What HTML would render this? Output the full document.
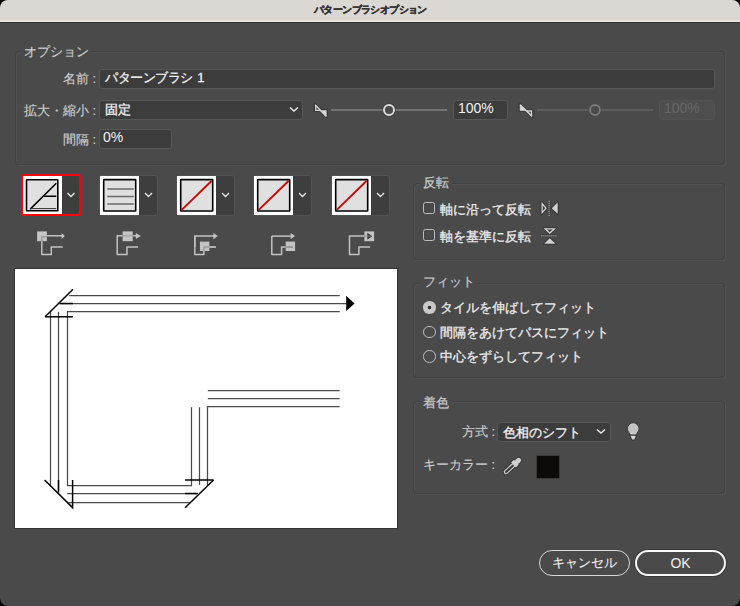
<!DOCTYPE html>
<html><head><meta charset="utf-8">
<style>
html,body{margin:0;padding:0;background:#000;width:740px;height:606px;overflow:hidden}
*{box-sizing:border-box}
body{font-family:"Liberation Sans",sans-serif;color:#ececec;font-size:13px;font-feature-settings:"palt";-webkit-text-stroke:0.3px currentColor}
#win{position:absolute;left:0;top:0;width:740px;height:606px;background:#4a4a4a;border-radius:8px;overflow:hidden}
#title{position:absolute;left:0;top:0;width:740px;height:22px;background:#dbd7d3;border-bottom:2px solid #e7e3df;color:#333;font-size:9.5px;font-weight:bold;text-align:center;line-height:20px;letter-spacing:-0.6px;-webkit-text-stroke:0.35px #333;padding-left:1px}
#tline{position:absolute;left:0;top:22px;width:740px;height:1px;background:#343434}
.abs{position:absolute}
.grp{position:absolute;border:1px solid #414141;border-radius:4px;box-shadow:1px 1px 0 #525252, inset 1px 1px 0 #525252}
.glabel{position:absolute;font-size:13px;color:#cbcbcb;line-height:16px;white-space:nowrap;-webkit-text-stroke:0.2px currentColor}
.lbl{position:absolute;font-size:13px;color:#cdcdcd;line-height:16px;white-space:nowrap;text-align:right;-webkit-text-stroke:0.15px currentColor}
.inp{position:absolute;background:#3c3c3c;border:1.3px solid #575757;border-radius:3px;color:#f2f2f2;font-size:13px;line-height:18px;padding-left:5px;white-space:nowrap}
.txt{position:absolute;white-space:nowrap;line-height:16px}
.tilebox{position:absolute;top:175px;width:59px;height:41px;border:1px solid #535353;border-radius:3px;background:#3e3e3e}
.tilebox::before{content:"";position:absolute;left:0;top:0;width:39px;height:39px;background:#fff}
.chk{position:absolute;width:12px;height:12px;border:1.3px solid #bdbdbd;border-radius:2.5px}
.radio{position:absolute;width:12.5px;height:12.5px;border:1.3px solid #bdbdbd;border-radius:50%}
.radio.sel{border:none;background:radial-gradient(circle,#333 0,#333 1.6px,#c8c8c8 2.1px)}
.btn{position:absolute;border-radius:13px;text-align:center;line-height:24px;font-size:13px;color:#f0f0f0;-webkit-text-stroke:0.1px currentColor}
</style></head><body>
<div id="win">
  <div id="title">パターンブラシオプション</div>
  <div id="tline"></div>

  <!-- Options group -->
  <div class="grp" style="left:15px;top:51px;width:710px;height:114px"></div>
  <div class="glabel" style="left:21px;top:44px;padding:0 3px;background:#4a4a4a">オプション</div>

  <div class="lbl" style="left:0;top:71px;width:96px">名前 :</div>
  <div class="inp" style="left:99px;top:69px;width:616px;height:20px;line-height:16.5px"><span style="letter-spacing:-0.45px">パターンブラシ</span><span style="margin-left:4.5px">1</span></div>

  <div class="lbl" style="left:0;top:102.5px;width:96px">拡大・縮小 :</div>
  <div class="inp" style="left:99px;top:99.5px;width:204px;height:20px;line-height:18.5px">固定</div>
  <svg class="abs" style="left:288px;top:105px" width="12" height="8"><path d="M2 2.5 L6 6 L10 2.5" fill="none" stroke="#e8e8e8" stroke-width="1.5"/></svg>

  <div class="lbl" style="left:0;top:132px;width:96px">間隔 :</div>
  <div class="inp" style="left:99px;top:129px;width:73px;height:20px;font-size:14px;line-height:15px;-webkit-text-stroke:0;padding-left:3px">0%</div>

  <!-- slider 1 -->
  <svg class="abs" style="left:0;top:0" width="740" height="130">
    <g stroke="#363636" stroke-width="3" fill="#363636" stroke-linejoin="round">
      <path d="M315.1 104.7 V110.6 H321 Z M315.1 104.7 L326.3 116.4 M321 110.6 H326.3 V116.4 Z"/>
      <path d="M520.1 104.7 V110.6 H526 Z M520.1 104.7 L532.1 116.4 M526 110.6 H532.1 V116.4 Z"/>
    </g>
    <g stroke="#d6d6d6" stroke-width="1.3" fill="none" stroke-linejoin="miter">
      <path d="M315.7 106 V110.3 H320" />
      <path d="M315.1 104.7 L326.3 116.4" stroke-width="1.5"/>
      <path d="M321 110.6 H326.3 V116.4 Z" fill="#d6d6d6" stroke-width="0.6"/>
      <path d="M520.1 104.7 V110.6 H526 Z" fill="#d6d6d6" stroke-width="0.6"/>
      <path d="M520.1 104.7 L532.1 116.4" stroke-width="1.5"/>
      <path d="M527 111 H531.5 V115.3"/>
    </g>
  </svg>
  <div class="abs" style="left:331px;top:109px;width:116px;height:2px;background:#727272"></div>
  <svg class="abs" style="left:381px;top:102px" width="16" height="16"><circle cx="8" cy="8" r="6.6" fill="#3a3a3a"/><circle cx="8" cy="8" r="5" fill="#4a4a4a" stroke="#dcdcdc" stroke-width="2"/></svg>
  <div class="inp" style="left:453px;top:100px;width:55px;height:20px;font-size:14px;line-height:15px;-webkit-text-stroke:0;padding-left:4px">100%</div>

  <!-- slider 2 (disabled) -->
  <div class="abs" style="left:537px;top:109px;width:116px;height:2px;background:#5c5c5c"></div>
  <svg class="abs" style="left:587px;top:102px" width="16" height="16"><circle cx="8" cy="8" r="6.4" fill="#444"/><circle cx="8" cy="8" r="5" fill="#4a4a4a" stroke="#7c7c7c" stroke-width="1.8"/></svg>
  <div class="inp" style="left:659px;top:100px;width:56px;height:20px;background:#4e4e4e;border-color:#535353;color:#666;font-size:14px;line-height:15px;-webkit-text-stroke:0;padding-left:4px">100%</div>

  <!-- tiles row -->
  <div class="abs" style="left:21px;top:174px;width:60px;height:42px;border:2px solid #f00;border-radius:3px;background:#3e3e3e"></div>
  <div class="abs" style="left:23px;top:176px;width:39px;height:38px;background:#fff"></div>
  <div class="tilebox" style="left:99px"></div>
  <div class="tilebox" style="left:176px"></div>
  <div class="tilebox" style="left:253px"></div>
  <div class="tilebox" style="left:331px"></div>
  <svg class="abs" style="left:0;top:0" width="740" height="606">
    <g fill="none" stroke-linecap="butt">
      <!-- tile 1 -->
      <rect x="26.5" y="179.8" width="31.3" height="31" rx="0.4" fill="#e0e0e0" stroke="#000" stroke-width="1.6"/>
      <path d="M30.2 209.1 L56.3 183.2" stroke="#000" stroke-width="1.5"/>
      <path d="M44 196.3 L56.3 196.3" stroke="#000" stroke-width="1.5"/>
      <path d="M30.5 208.6 L56.3 208.6" stroke="#333" stroke-width="1"/>
      <!-- tile 2 -->
      <rect x="103.7" y="179.6" width="32" height="31.4" rx="0.4" fill="#e0e0e0" stroke="#000" stroke-width="1.6"/>
      <path d="M107.3 188.9 H133.8 M107.3 196.5 H133.8 M107.3 203.9 H133.8" stroke="#6a6a6a" stroke-width="1.5"/>
      <!-- tile 3-5 -->
      <rect x="180.7" y="179.6" width="32" height="31.4" rx="0.4" fill="#e0e0e0" stroke="#000" stroke-width="1.6"/>
      <path d="M182 209.6 L211.5 181" stroke="#c80808" stroke-width="1.9"/>
      <rect x="257.7" y="179.6" width="32" height="31.4" rx="0.4" fill="#e0e0e0" stroke="#000" stroke-width="1.6"/>
      <path d="M259 209.6 L288.5 181" stroke="#c80808" stroke-width="1.9"/>
      <rect x="335.7" y="179.6" width="32" height="31.4" rx="0.4" fill="#e0e0e0" stroke="#000" stroke-width="1.6"/>
      <path d="M337 209.6 L366.5 181" stroke="#c80808" stroke-width="1.9"/>
      <!-- chevrons -->
      <g stroke="#e8e8e8" stroke-width="1.4">
        <path d="M67.5 193 L71 196.5 L74.5 193"/>
        <path d="M145 193 L148.5 196.5 L152 193"/>
        <path d="M222 193 L225.5 196.5 L229 193"/>
        <path d="M299 193 L302.5 196.5 L306 193"/>
        <path d="M377 193 L380.5 196.5 L384 193"/>
      </g>
    </g>
    <!-- icons row -->
    <g fill="none" stroke="#c2c2c2" stroke-width="1.5" stroke-linejoin="round">
      <!-- icon1 -->
      <rect x="37.1" y="231.4" width="9.8" height="9.8" fill="#c4c4c4" stroke="none"/>
      <path d="M47 235.8 H62"/>
      <path d="M61.6 233 L64.8 235.9 L61.6 238.9 Z" fill="#c2c2c2" stroke="none"/>
      <path d="M41.8 241.2 V254.4 H51.3 V247 H62.8"/>
      <path d="M41.8 241 V236.8 H46.9" stroke="#9a9a9a"/>
      <!-- icon2 -->
      <path d="M122.6 235.8 H117.2 V254.4 H127 V247 H138.1"/>
      <path d="M132.7 235.8 H137"/>
      <path d="M135.8 233 L140.8 235.9 L135.8 238.9 Z" fill="#c2c2c2" stroke="none"/>
      <rect x="122.6" y="231.4" width="10.1" height="9.8" fill="#c4c4c4" stroke="none"/>
      <path d="M122.6 235.8 H132.7" stroke="#9a9a9a" stroke-width="1"/>
      <!-- icon3 -->
      <path d="M194.8 247 V236.1 H214"/>
      <path d="M194.8 236.1 V254.4 H203.9 V251"/>
      <path d="M213.4 233 L217.8 236.1 L213.4 239.2 Z" fill="#c2c2c2" stroke="none"/>
      <rect x="199.9" y="241.6" width="9.5" height="9.4" fill="#c4c4c4" stroke="none"/>
      <path d="M203.9 251 V247 H215.8" stroke="#9a9a9a"/>
      <path d="M209.4 247 H215.8"/>
      <!-- icon4 -->
      <path d="M271.8 236.1 H291"/>
      <path d="M271.8 236.1 V254.4 H281.6 V247 H285.7"/>
      <path d="M290.7 233 L295.1 236.1 L290.7 239.2 Z" fill="#c2c2c2" stroke="none"/>
      <rect x="285.7" y="241.6" width="9.4" height="9.4" fill="#c4c4c4" stroke="none"/>
      <path d="M285.7 247 H293" stroke="#8a8a8a"/>
      <!-- icon5 -->
      <path d="M364.4 236.1 H349.5 V254.4 H358.9 V247 H370.1"/>
      <rect x="364.4" y="231.4" width="9.7" height="9.8" fill="#c4c4c4" stroke="none"/>
      <path d="M367.3 232.8 L372.3 236.2 L367.3 239.6 Z" fill="#2e2e2e" stroke="none"/>
      <path d="M364.4 236.1 H371" stroke="#8a8a8a" stroke-width="1"/>
    </g>
  </svg>

  <!-- preview -->
  <div class="abs" style="left:14px;top:268px;width:384px;height:261px;background:#fff;border:1px solid #333"></div>
  <svg class="abs" style="left:0;top:0" width="740" height="606">
    <g fill="none" stroke="#4a4a4a" stroke-width="1.25">
      <path d="M69.2 295.5 H339.7"/>
      <path d="M59.7 303.5 H346.5"/>
      <path d="M339.7 311.5 H67.5 V485.5 H191.5 V407.3"/>
      <path d="M50.5 311.5 V485.6"/>
      <path d="M58.5 311.8 V492.4"/>
      <path d="M67.2 493.5 H197.8"/>
      <path d="M68.5 502.5 H189.7"/>
      <path d="M199.5 484.9 V407.3"/>
      <path d="M207.5 485.8 V406.5 H339.7"/>
      <path d="M207.8 390.5 H339.7"/>
      <path d="M207.8 398.5 H339.7"/>
    </g>
    <g fill="none" stroke="#000" stroke-width="1.5">
      <path d="M45.1 316.8 L73 289.2"/>
      <path d="M45.1 316.8 H73"/>
      <path d="M59.7 303.5 H73"/>
      <path d="M44.6 480 L72.6 507.6 V480"/>
      <path d="M58.5 480 V492.4"/>
      <path d="M213.5 480 L185.1 507.8"/>
      <path d="M185.1 480 H213.5"/>
      <path d="M185.1 493.5 H197.8"/>
    </g>
    <path d="M346.2 295.8 L354.6 303.5 L346.2 311.1 Z" fill="#000"/>
  </svg>

  <!-- Flip group -->
  <div class="grp" style="left:413px;top:183px;width:312px;height:77px"></div>
  <div class="glabel" style="left:420px;top:175px;padding:0 3px;background:#4a4a4a">反転</div>
  <div class="chk" style="left:423px;top:202px"></div>
  <div class="txt" style="left:440px;top:201.5px">軸に沿って反転</div>
  <div class="chk" style="left:423px;top:229px"></div>
  <div class="txt" style="left:440px;top:228.5px">軸を基準に反転</div>
  <svg class="abs" style="left:0;top:0" width="740" height="260">
    <g stroke="#393939" stroke-width="2.6" fill="#393939" stroke-linejoin="round">
      <path d="M541.6 202.6 L547 208.2 L541.6 213.8 Z M557.6 202.6 L551.8 208.2 L557.6 213.8 Z M544.2 228.2 H555.4 L549.8 233.6 Z M544.2 243.8 H555.4 L549.8 238.2 Z"/>
      <path d="M549.1 200.7 V216.1 M541.4 235.8 H557" />
    </g>
    <path d="M542.2 203.8 L546.1 208.2 L542.2 212.6 Z" fill="none" stroke="#d2d2d2" stroke-width="1.3"/>
    <path d="M557.6 202.6 L551.8 208.2 L557.6 213.8 Z" fill="#d2d2d2"/>
    <path d="M549.1 200.7 V216.1" stroke="#c8c8c8" stroke-width="1.2" stroke-dasharray="1 1"/>
    <path d="M545.2 228.8 H554.4 L549.8 233 Z" fill="none" stroke="#d2d2d2" stroke-width="1.3"/>
    <path d="M544.2 243.8 H555.4 L549.8 238.2 Z" fill="#d2d2d2"/>
    <path d="M541.4 235.8 H557" stroke="#c8c8c8" stroke-width="1.2" stroke-dasharray="1 1"/>
  </svg>

  <!-- Fit group -->
  <div class="grp" style="left:413px;top:283px;width:312px;height:95px"></div>
  <div class="glabel" style="left:420px;top:274px;padding:0 3px;background:#4a4a4a">フィット</div>
  <div class="radio sel" style="left:423.2px;top:301px"></div>
  <div class="txt" style="left:439.5px;top:300px">タイルを伸ばしてフィット</div>
  <div class="radio" style="left:423.2px;top:325.5px"></div>
  <div class="txt" style="left:439.5px;top:324.5px">間隔をあけてパスにフィット</div>
  <div class="radio" style="left:423.2px;top:350px"></div>
  <div class="txt" style="left:439.5px;top:349px">中心をずらしてフィット</div>

  <!-- Colorize group -->
  <div class="grp" style="left:413px;top:401px;width:312px;height:93px"></div>
  <div class="glabel" style="left:420px;top:394.5px;padding:0 3px;background:#4a4a4a">着色</div>
  <div class="lbl" style="left:400px;top:424px;width:95px">方式 :</div>
  <div class="inp" style="left:497px;top:421.5px;width:114px;height:20px;line-height:19px">色相のシフト</div>
  <svg class="abs" style="left:595px;top:427px" width="12" height="8"><path d="M2 2.5 L6 6 L10 2.5" fill="none" stroke="#e8e8e8" stroke-width="1.5"/></svg>
  <svg class="abs" style="left:0;top:400px" width="740" height="100">
    <g transform="translate(0,-400)">
    <g stroke="#393939" stroke-width="2.4" fill="#393939" stroke-linejoin="round">
      <path d="M633.2 423.8 C630.3 423.8 628.4 425.9 628.4 428.6 C628.4 430.8 629.8 432 630.6 433.9 H635.8 C636.6 432 638 430.8 638 428.6 C638 425.9 636.1 423.8 633.2 423.8 Z"/>
      <path d="M630.5 435.8 H635.9 L634.2 439.5 H632.2 Z"/>
    </g>
    <path d="M633.2 423.8 C630.3 423.8 628.4 425.9 628.4 428.6 C628.4 430.8 629.8 432 630.6 433.9 H635.8 C636.6 432 638 430.8 638 428.6 C638 425.9 636.1 423.8 633.2 423.8 Z" fill="#c2c2c2" stroke="#d8d8d8" stroke-width="0.9"/>
    <path d="M630.5 435.8 H635.9 L634.2 439.5 H632.2 Z" fill="#d2d2d2"/>
    <g transform="translate(504.3,473.6) rotate(-43)">
      <g stroke="#393939" stroke-width="2.2" fill="#393939" stroke-linejoin="round">
        <rect x="0.2" y="-2.3" width="13.5" height="4.6" rx="2.3"/>
        <rect x="12.5" y="-3.4" width="4" height="6.8"/>
        <rect x="15.5" y="-2.5" width="6.5" height="5" rx="2.5"/>
      </g>
      <rect x="0.8" y="-1.7" width="12.5" height="3.4" rx="1.7" fill="#3a3a3a" stroke="#d0d0d0" stroke-width="1.2"/>
      <rect x="12.5" y="-3.4" width="4" height="6.8" fill="#cfcfcf"/>
      <rect x="15.5" y="-2.5" width="6.5" height="5" rx="2.5" fill="#cfcfcf"/>
    </g>
    </g>
  </svg>
  <div class="lbl" style="left:400px;top:457px;width:95px">キーカラー :</div>
  
  <div class="abs" style="left:536px;top:455px;width:24px;height:24px;background:#0c0b0a;border:1px solid #3a3a3a"></div>

  <!-- buttons -->
  <div class="btn" style="left:539px;top:550px;width:91px;height:26px;border:1.6px solid #d8d8d8;line-height:24.5px">キャンセル</div>
  <div class="btn" style="left:635px;top:550px;width:91px;height:26px;border:2px solid #f8f8f8;line-height:23px;font-size:14px;-webkit-text-stroke:0;box-shadow:0 0 0 1px #383838">OK</div>

</div>
</body></html>
